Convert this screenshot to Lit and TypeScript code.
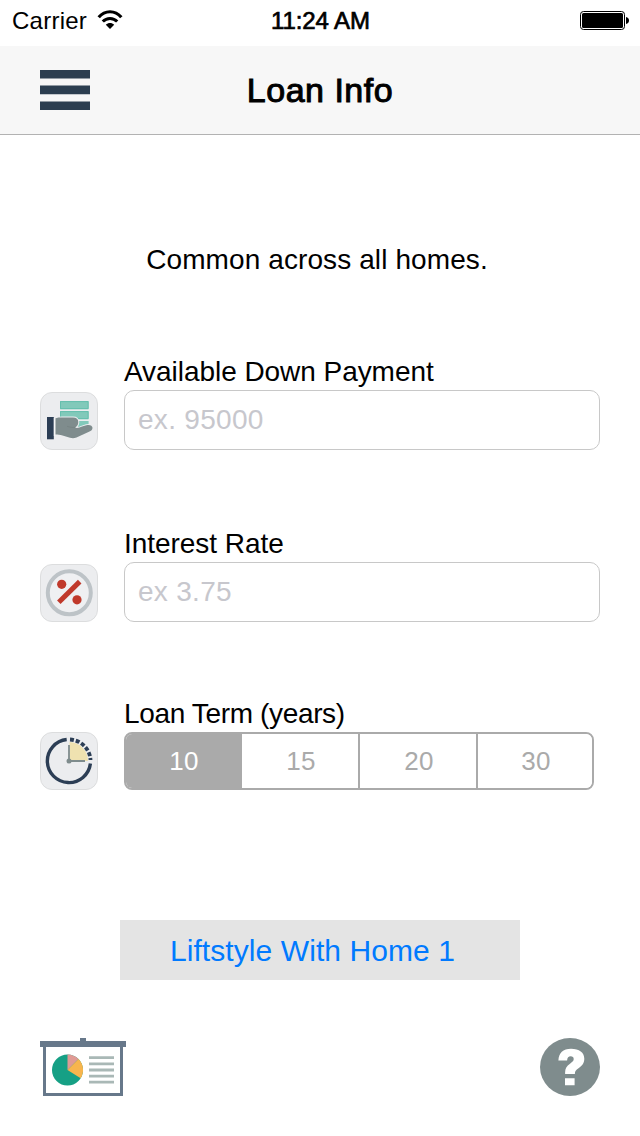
import { LitElement, html, css, svg } from "lit";
import { customElement, property, state } from "lit/decorators.js";
import { classMap } from "lit/directives/class-map.js";

const downPaymentIcon = svg`
  <rect x="20" y="9" width="28.6" height="8.2" fill="#82c9ba"/>
  <rect x="20" y="19" width="28.6" height="8.2" fill="#82c9ba"/>
  <rect x="30" y="29" width="18.6" height="7" fill="#82c9ba"/>
  <path d="M20.5 9.6h27.6v7h-27.6zM20.5 19.6h27.6v7h-27.6z" fill="none" stroke="#66bfae" stroke-width="1"/>
  <path d="M15.3 26.3c2-.9 4-.9 7-.9H33c3.500 0 5.200 1.600 5.300 4.600 0 3-1.300 4.600-3.600 5.600 2.400.6 4.800.2 7.300-1l4.300-1.400c3.500-.9 6 .2 6.200 2.600.1 2-1.300 3-3.500 4L36.500 45.500c-2.500 1-4 1-6.500.3l-7.500-2.300c-2.500-.7-4.500-1-7.200-1z" fill="#7f8c8d" stroke="#ecedef" stroke-width="2" paint-order="stroke"/>
  <path d="M27 34.300c3 1 5.500 1.200 8.500 1.200" fill="none" stroke="#737f80" stroke-width=".7"/>
  <rect x="7" y="25" width="6.800" height="22.300" fill="#2c3e55"/>
  <rect x="13.800" y="26" width="1.500" height="18" fill="#f5f6f6"/>`;

const rateIcon = svg`
  <circle cx="29.300" cy="28.800" r="21.500" fill="#eff0f2" stroke="#bdc3c7" stroke-width="4"/>
  <circle cx="21.700" cy="20.300" r="4.600" fill="#c0392b"/>
  <circle cx="37" cy="35.800" r="4.600" fill="#c0392b"/>
  <path d="M18.800 38.200 39.700 17.600" stroke="#c0392b" stroke-width="5"/>`;

const termIcon = svg`
  <path d="M29.500 29V10A19 19 0 0 1 48 29z" fill="#efe2b0"/>
  <path d="M26.700 7.500A21.600 21.600 0 1 0 50.400 31.500" fill="none" stroke="#2c3e55" stroke-width="3.400"/>
  <path d="M30 7.500A21.600 21.600 0 0 1 50.500 28" fill="none" stroke="#2c3e55" stroke-width="3.800" stroke-dasharray="4 1.900"/>
  <path d="M29 29V13M29 29H45" stroke="#7f8c8d" stroke-width="1.800"/>
  <circle cx="29" cy="29" r="2.500" fill="#7f8c8d"/>`;

@customElement("icon-tile")
class IconTile extends LitElement {
  @property({ attribute: false }) glyph: unknown;
  static styles = css`
    :host { display: block; width: 58px; height: 58px; }
    svg { display: block; }
  `;
  render() {
    return html`<svg width="58" height="58" viewBox="0 0 58 58">
      <rect x=".5" y=".5" width="57" height="57" rx="11.500" fill="#ecedef" stroke="#dcddde"/>
      ${this.glyph}
    </svg>`;
  }
}

@customElement("app-root")
class AppRoot extends LitElement {
  @state() private term = 10;

  static styles = css`
    :host {
      display: block; width: 640px; height: 1136px; overflow: hidden;
      background: #fff; color: #000;
      font-family: "Liberation Sans", Arial, sans-serif;
      font-size: 28px;
    }
    * { box-sizing: border-box; }
    svg { display: block; }
    .status {
      height: 46px; padding: 6px 11px 0 12px;
      display: grid; grid-template-columns: 1fr auto 1fr; align-items: start;
      font-size: 24px; line-height: 30px;
    }
    .carrier { display: flex; gap: 10px; letter-spacing: 0.250px; }
    .carrier svg { margin-top: 4px; }
    .time { -webkit-text-stroke: 0.700px #000; letter-spacing: -0.100px; }
    .battery { justify-self: end; margin-top: 4px; }
    header {
      height: 89px; padding: 0 40px; background: #f7f7f7; border-bottom: 1px solid #b2b2b2;
      display: grid; grid-template-columns: 1fr auto 1fr; align-items: center;
    }
    h1 { margin: 0; font-size: 34px; font-weight: 400; line-height: 40px; -webkit-text-stroke: 1px #000; letter-spacing: 0.500px; }
    .menu { display: block; }
    .intro { margin: 108px 0 0; padding-right: 6px; text-align: center; line-height: 34px; letter-spacing: 0.100px; }
    form { padding: 78px 40px 0; }
    .field { display: grid; grid-template-columns: 58px 1fr; column-gap: 26px; align-items: end; }
    .field + .field { margin-top: 77px; }
    .field + .field.term { margin-top: 75px; }
    .field label, .label { display: block; height: 35px; line-height: 34px; letter-spacing: -0.050px; }
    .term .label { letter-spacing: -0.350px; }
    .control { display: flex; flex-direction: column; }
    input {
      width: 476px; height: 60px; padding: 0 13px; border: 1px solid #c8c8c8; border-radius: 10px;
      background: #fff; font: inherit; letter-spacing: 0.300px; outline: none;
    }
    input::placeholder { color: #c7c7cd; opacity: 1; }
    .segments {
      width: 470px; height: 58px; display: grid; grid-template-columns: 116px 118px 118px 1fr;
      border: 2px solid #aaa; border-radius: 8px; overflow: hidden;
    }
    .segment {
      border: 0; border-right: 2px solid #aaa; padding: 0 0 0 2px; background: #fff;
      font: inherit; font-size: 26px; letter-spacing: 0.300px; color: #aaa;
    }
    .segment:last-child { border-right: 0; }
    .segment.on { background: #aaa; color: #fff; }
    .go {
      display: block; width: 400px; height: 60px; margin: 130px auto 0; padding: 2px 21px 0 6px; border: 0;
      background: #e4e4e4; color: #007aff; font: inherit; font-size: 30px; letter-spacing: 0.080px;
    }
    footer { display: flex; justify-content: space-between; padding: 58px 40px 0; }
  `;

  render() {
    return html`
      <div class="status">
        <div class="carrier"><span class="name">Carrier</span>
          <svg width="26" height="20" viewBox="0 0 26 20">
            <path d="M1.700 7.200C8-.1 18-.1 24.300 7.200" fill="none" stroke="#000" stroke-width="3.200"/>
            <path d="M5.800 11.600c4-4.300 10.400-4.300 14.400 0" fill="none" stroke="#000" stroke-width="3"/>
            <path d="M13 19 8.800 14.800c2.400-2.300 6-2.300 8.400 0z"/>
          </svg>
        </div>
        <span class="time">11:24 AM</span>
        <svg class="battery" width="49" height="20" viewBox="0 0 49 20">
          <rect x=".5" y="1.500" width="44" height="18" rx="3" fill="none" stroke="#000"/>
          <rect x="2" y="3" width="41" height="15" rx="1.500"/>
          <path d="M46 7c2 .3 3 1.700 3 3.500s-1 3.200-3 3.500z"/>
        </svg>
      </div>
      <header>
        <svg class="menu" width="50" height="40" viewBox="0 0 50 40">
          <path d="M0 0h50v8.500H0zM0 15.500h50v8.700H0zM0 31.500h50v8.500H0z" fill="#2c3e50"/>
        </svg>
        <h1>Loan Info</h1>
      </header>
      <p class="intro">Common across all homes.</p>
      <form>
        <div class="field">
          <icon-tile .glyph=${downPaymentIcon}></icon-tile>
          <div class="control"><label for="down">Available Down Payment</label>
            <input id="down" placeholder="ex. 95000"></div>
        </div>
        <div class="field">
          <icon-tile .glyph=${rateIcon}></icon-tile>
          <div class="control"><label for="rate">Interest Rate</label>
            <input id="rate" placeholder="ex 3.75"></div>
        </div>
        <div class="field term">
          <icon-tile .glyph=${termIcon}></icon-tile>
          <div class="control"><span class="label">Loan Term (years)</span>
            <div class="segments">${[10, 15, 20, 30].map((years) => html`
              <button type="button" class=${classMap({ segment: true, on: years === this.term })}
                @click=${() => (this.term = years)}>${years}</button>`)}</div></div>
        </div>
      </form>
      <button class="go">Liftstyle With Home 1</button>
      <footer>
        <svg width="86" height="60" viewBox="0 0 86 60">
          <path d="M4.500 7V56.500H81.500V7" fill="#fff" stroke="#67788a" stroke-width="3"/>
          <path d="M0 3h86v6H0zM40 0h6v4h-6z" fill="#67788a"/>
          <circle cx="27.500" cy="32" r="15.500" fill="#16a085"/>
          <path d="M27.500 32V16.500A15.500 15.500 0 0 1 38.500 21z" fill="#e09a94"/>
          <path d="M27.500 32 38.500 21A15.500 15.500 0 0 1 40.700 40.200z" fill="#f8b54d"/>
          <path d="M49 19.700h25M49 25.900h25M49 32h25M49 38.100h25M49 44.200h25" stroke="#a9b8b6" stroke-width="2.800"/>
        </svg>
        <svg width="60" height="58" viewBox="0 0 60 58">
          <ellipse cx="30" cy="29" rx="30" ry="29" fill="#7f8c8d"/>
          <path d="M18.400 22.500C18.700 14.800 23 10.700 31 10.700c8.300 0 13.300 3.800 13.300 10 0 4.500-2.100 7-5.800 9.500-2.600 1.800-3.600 3-3.600 5.300v.6h-9.800v-1.500c0-4.100 1.500-6.500 4.900-8.900 2.700-1.900 3.700-2.900 3.700-4.600 0-1.800-1.100-2.800-3-2.800-2.200 0-3.400 1.400-3.600 4.200zM25 40.300h9.600v7H25z" fill="#fff"/>
        </svg>
      </footer>
    `;
  }
}
